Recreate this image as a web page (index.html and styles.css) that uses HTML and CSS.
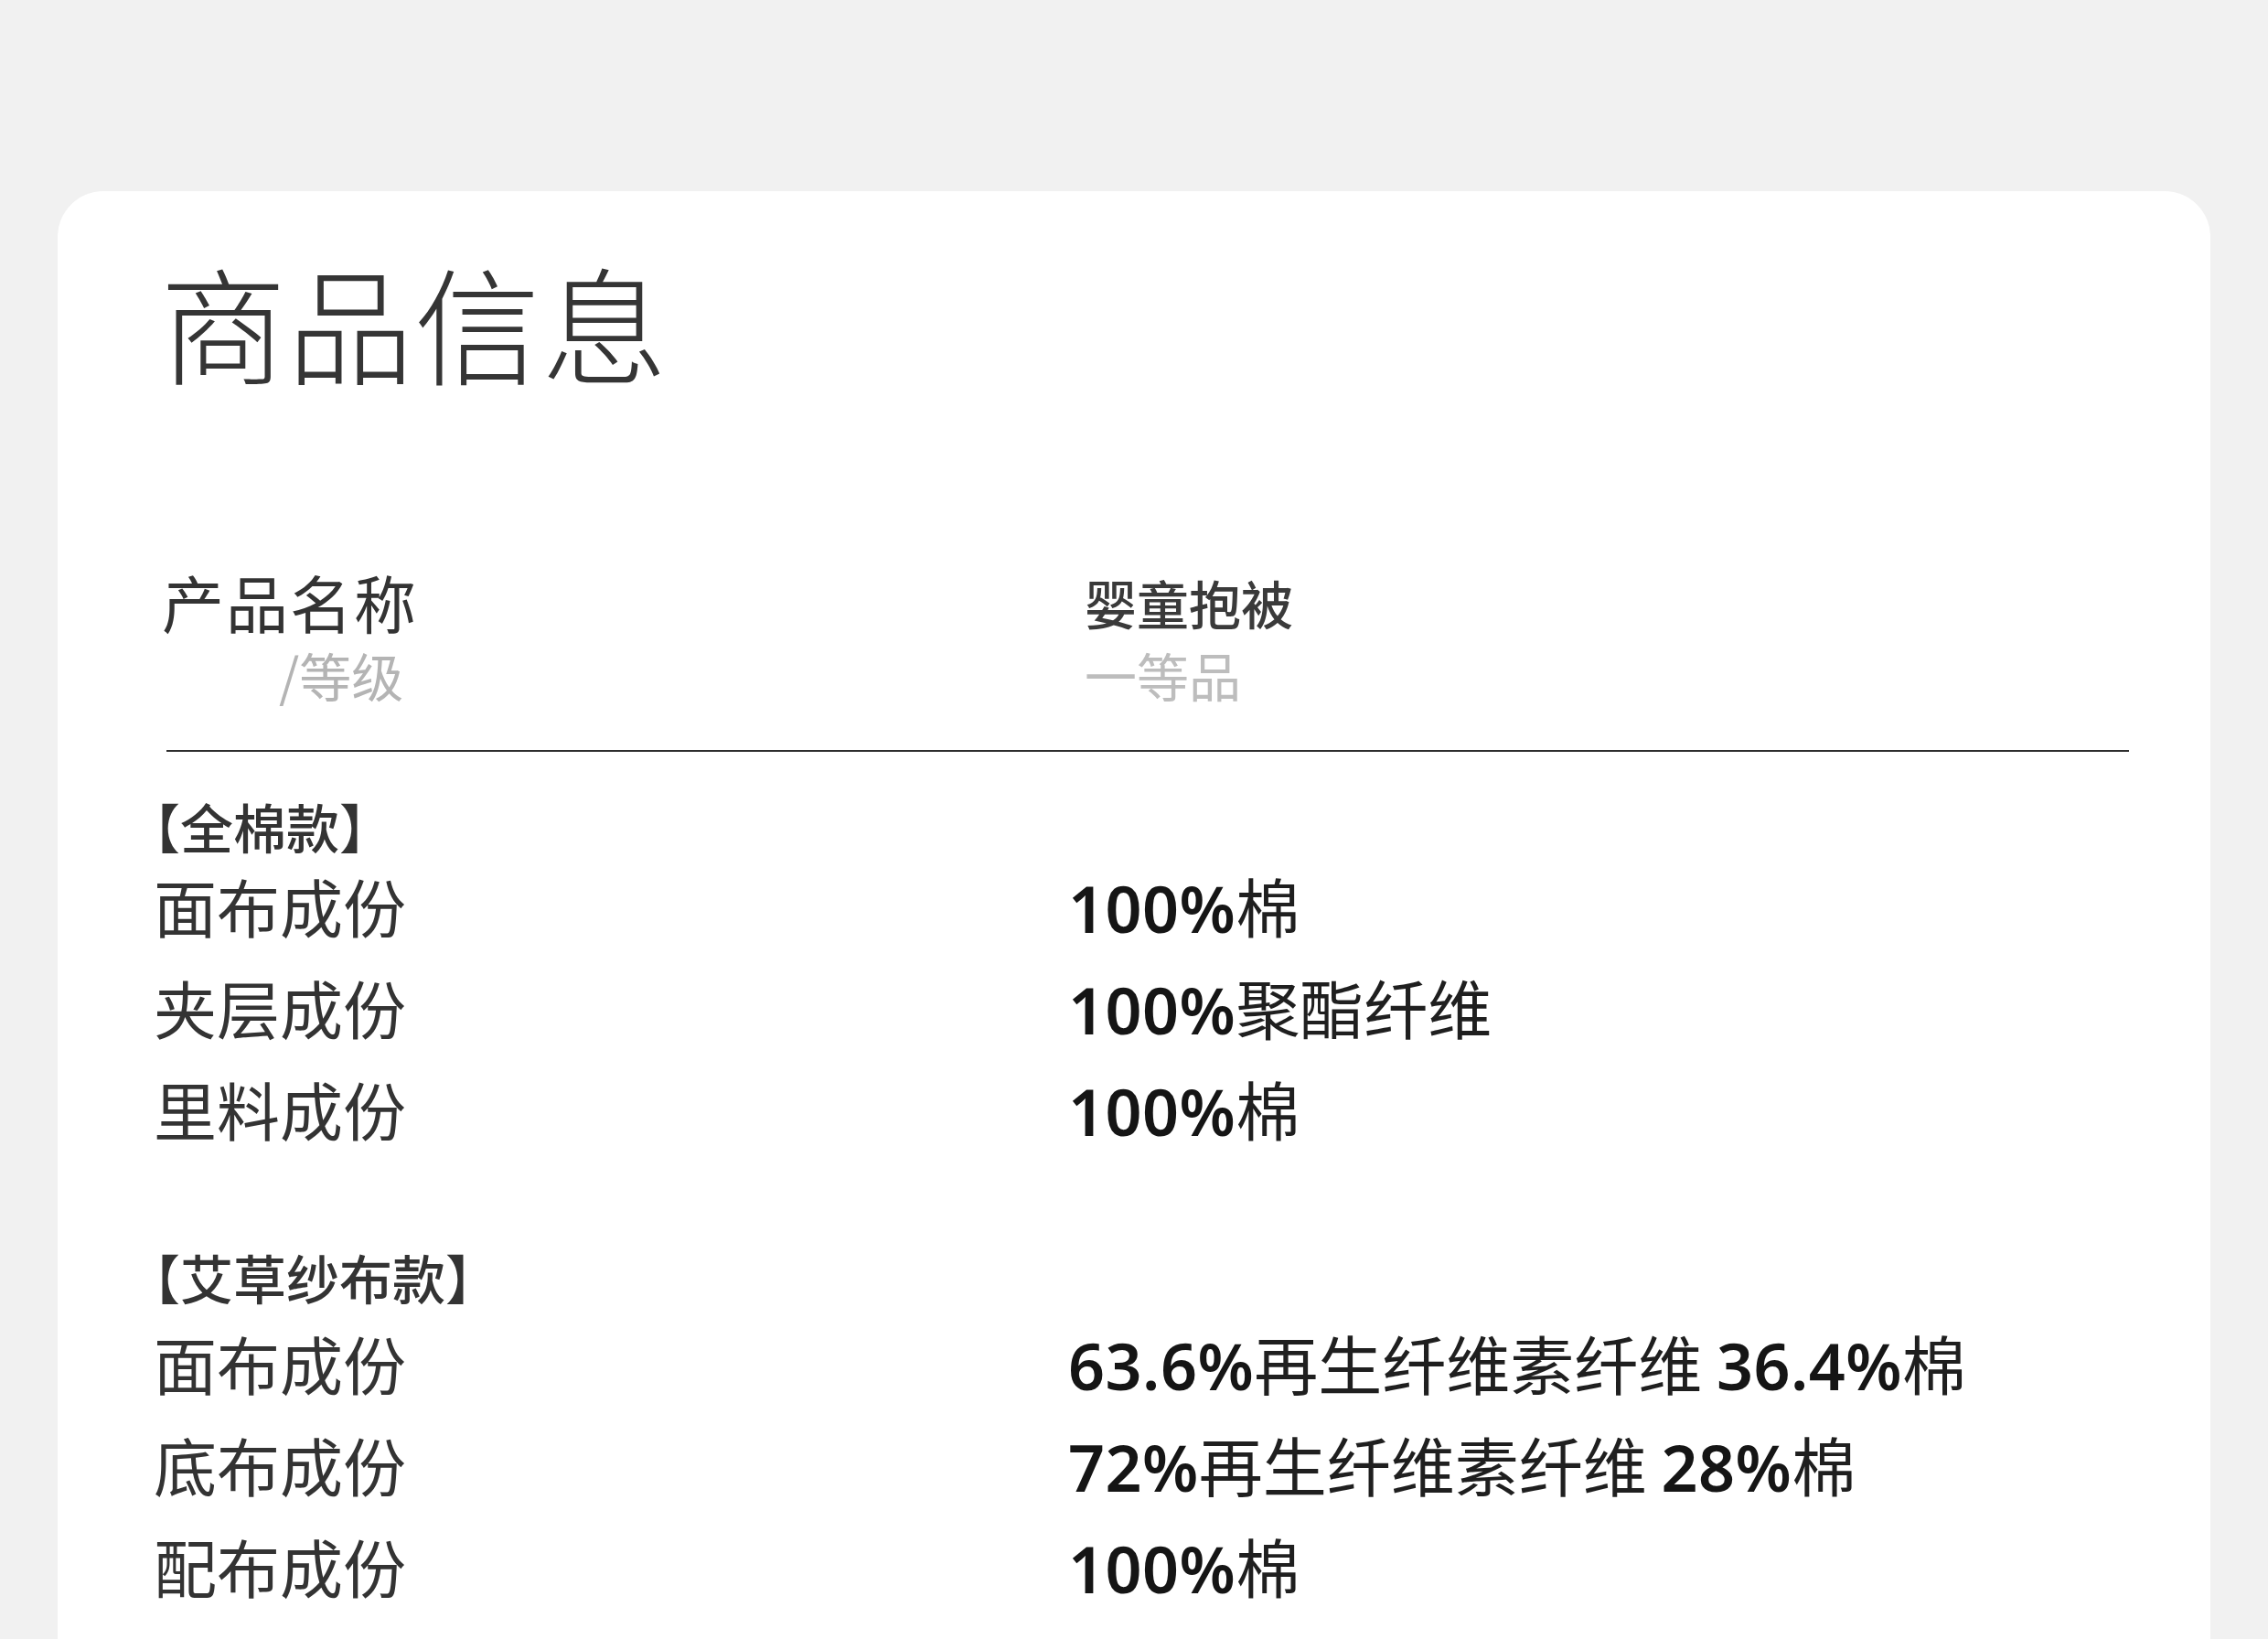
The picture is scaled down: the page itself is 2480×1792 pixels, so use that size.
FILE: index.html
```html
<!DOCTYPE html>
<html lang="zh-CN">
<head>
<meta charset="utf-8">
<title>商品信息</title>
<link rel="stylesheet" href="styles.css">
</head>
<body>
<main class="card">
  <h1 class="title">商品信息</h1>
  <section class="content">
    <div class="header">
      <div class="head-label">
        <div class="head-main">产品名称</div>
        <div class="head-sub">/等级</div>
      </div>
      <div class="head-value">
        <div class="value-main">婴童抱被</div>
        <div class="value-sub">一等品</div>
      </div>
    </div>
    <div class="rule"></div>

    <div class="group">
      <div class="group-title">【全棉款】</div>
      <div class="row"><span class="label">面布成份</span><span class="value"><b>100%</b>棉</span></div>
      <div class="row"><span class="label">夹层成份</span><span class="value"><b>100%</b>聚酯纤维</span></div>
      <div class="row"><span class="label">里料成份</span><span class="value"><b>100%</b>棉</span></div>
    </div>

    <div class="group group-second">
      <div class="group-title">【艾草纱布款】</div>
      <div class="row"><span class="label">面布成份</span><span class="value"><b>63.6%</b>再生纤维素纤维 <b>36.4%</b>棉</span></div>
      <div class="row"><span class="label">底布成份</span><span class="value"><b>72%</b>再生纤维素纤维 <b>28%</b>棉</span></div>
      <div class="row"><span class="label">配布成份</span><span class="value"><b>100%</b>棉</span></div>
    </div>
  </section>
</main>
</body>
</html>
```
FILE: styles.css
```css
html, body {
  margin: 0;
  padding: 0;
  background: #f1f1f1;
  height: 1792px;
  overflow: hidden;
}

body {
  font-family: "Noto Sans CJK SC", "Noto Sans", sans-serif;
  color: #333333;
}

.card {
  margin: 209px 63px 0 63px;
  background: #ffffff;
  border-radius: 50px;
  height: 1800px;
  padding: 72px 89px 0 105px;
  box-sizing: border-box;
}

.title {
  margin: 0 0 0 7px;
  font-size: 138px;
  line-height: 138px;
  font-weight: 300;
  color: #353535;
  letter-spacing: 1px;
}

.content {
  margin-top: 199px;
}

.header {
  display: grid;
  grid-template-columns: 1009px 1fr;
  padding-left: 9px;
}

.head-main {
  font-size: 68px;
  line-height: 80px;
  font-weight: 400;
  color: #333333;
  letter-spacing: 2px;
}

.head-sub {
  font-size: 57px;
  line-height: 78px;
  color: #b4b4b4;
  padding-left: 128px;
}

.value-main {
  font-size: 57px;
  line-height: 80px;
  font-weight: 500;
  color: #3a3a3a;
}

.value-sub {
  font-size: 57px;
  line-height: 78px;
  color: #bdbdbd;
}

.rule {
  margin: 44px 0 0 14px;
  height: 2px;
  background: #2e2e2e;
}

.group {
  margin-top: 48px;
}

.group-second {
  margin-top: 94px;
}

.group-title {
  font-size: 58px;
  line-height: 66px;
  font-weight: 500;
  color: #333333;
  margin-left: -29px;
}

.group-second .group-title {
  margin-bottom: 7px;
}

.row {
  display: grid;
  grid-template-columns: 1000px 1fr;
  font-size: 69px;
  line-height: 108px;
}

.label {
  color: #333333;
  font-weight: 400;
}

.value {
  color: #1f1f1f;
  font-weight: 400;
  font-size: 70px;
  white-space: nowrap;
}

.value b {
  font-family: "Noto Sans", sans-serif;
  font-weight: 600;
  color: #151515;
  letter-spacing: 0.5px;
}
```
